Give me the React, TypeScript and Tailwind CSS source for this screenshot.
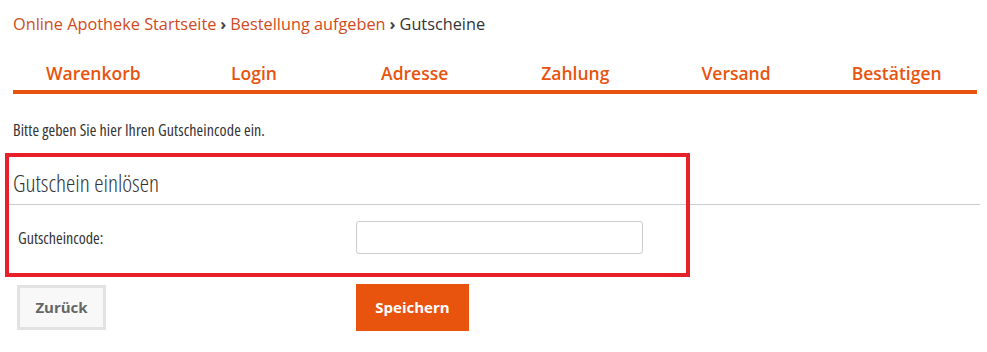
export default function App() {
  const steps = ["Warenkorb", "Login", "Adresse", "Zahlung", "Versand", "Bestätigen"];

  return (
    <div
      className="relative h-[352px] w-[987px] overflow-hidden bg-white pl-[13px] pr-[10px] text-[#333]"
      style={{ fontFamily: '"Open Sans", "Liberation Sans", sans-serif' }}
    >
      {/* breadcrumb */}
      <div className="pt-[14px] text-[16.3px] leading-[20px]">
        <a className="text-[#cf4a22]">Online Apotheke Startseite</a>
        <span className="mx-[4px] font-bold text-[#444]">›</span>
        <a className="text-[#cf4a22]">Bestellung aufgeben</a>
        <span className="mx-[4px] font-bold text-[#444]">›</span>
        <span className="text-[#333]">Gutscheine</span>
      </div>

      {/* checkout steps */}
      <div className="mt-[24px] flex h-[36px] items-start border-b-4 border-[#e8530e]">
        {steps.map((s) => (
          <div key={s} className="flex-1 text-center text-[17.5px] font-semibold leading-[30px] text-[#e8530e]">
            {s}
          </div>
        ))}
      </div>

      <p className="mt-[26px] text-[16px] leading-[20px] tracking-[0.1px] font-stretch-condensed">
        Bitte geben Sie hier Ihren Gutscheincode ein.
      </p>

      {/* voucher form */}
      <div className="mt-[28px]">
        <h2 className="-ml-[5px] mr-[-3px] border-b border-[#cccccc] pb-[6px] pl-[5px] text-[23.5px] font-light leading-[30px] font-stretch-condensed">
          Gutschein einlösen
        </h2>
        <div className="mt-[16px] flex items-center">
          <label className="w-[343px] pl-[5px] text-[16px] font-stretch-condensed">Gutscheincode:</label>
          <input
            type="text"
            className="h-[33px] w-[287px] rounded-[3px] border border-[#cccccc] bg-white px-2 outline-none"
          />
        </div>
      </div>

      <div className="mt-[30px] flex items-center">
        <button className="ml-[4px] h-[45px] w-[89px] border-[3px] border-[#e2e2e2] bg-[#f8f8f8] text-[15px] font-bold text-[#666]">
          Zurück
        </button>
        <button className="ml-[250px] h-[47px] w-[113px] bg-[#e8530e] text-[15px] font-bold text-white">
          Speichern
        </button>
      </div>

      {/* highlight annotation */}
      <div className="pointer-events-none absolute left-[5px] top-[153px] h-[124px] w-[685px] border-4 border-[#e8202a]" />
    </div>
  );
}
